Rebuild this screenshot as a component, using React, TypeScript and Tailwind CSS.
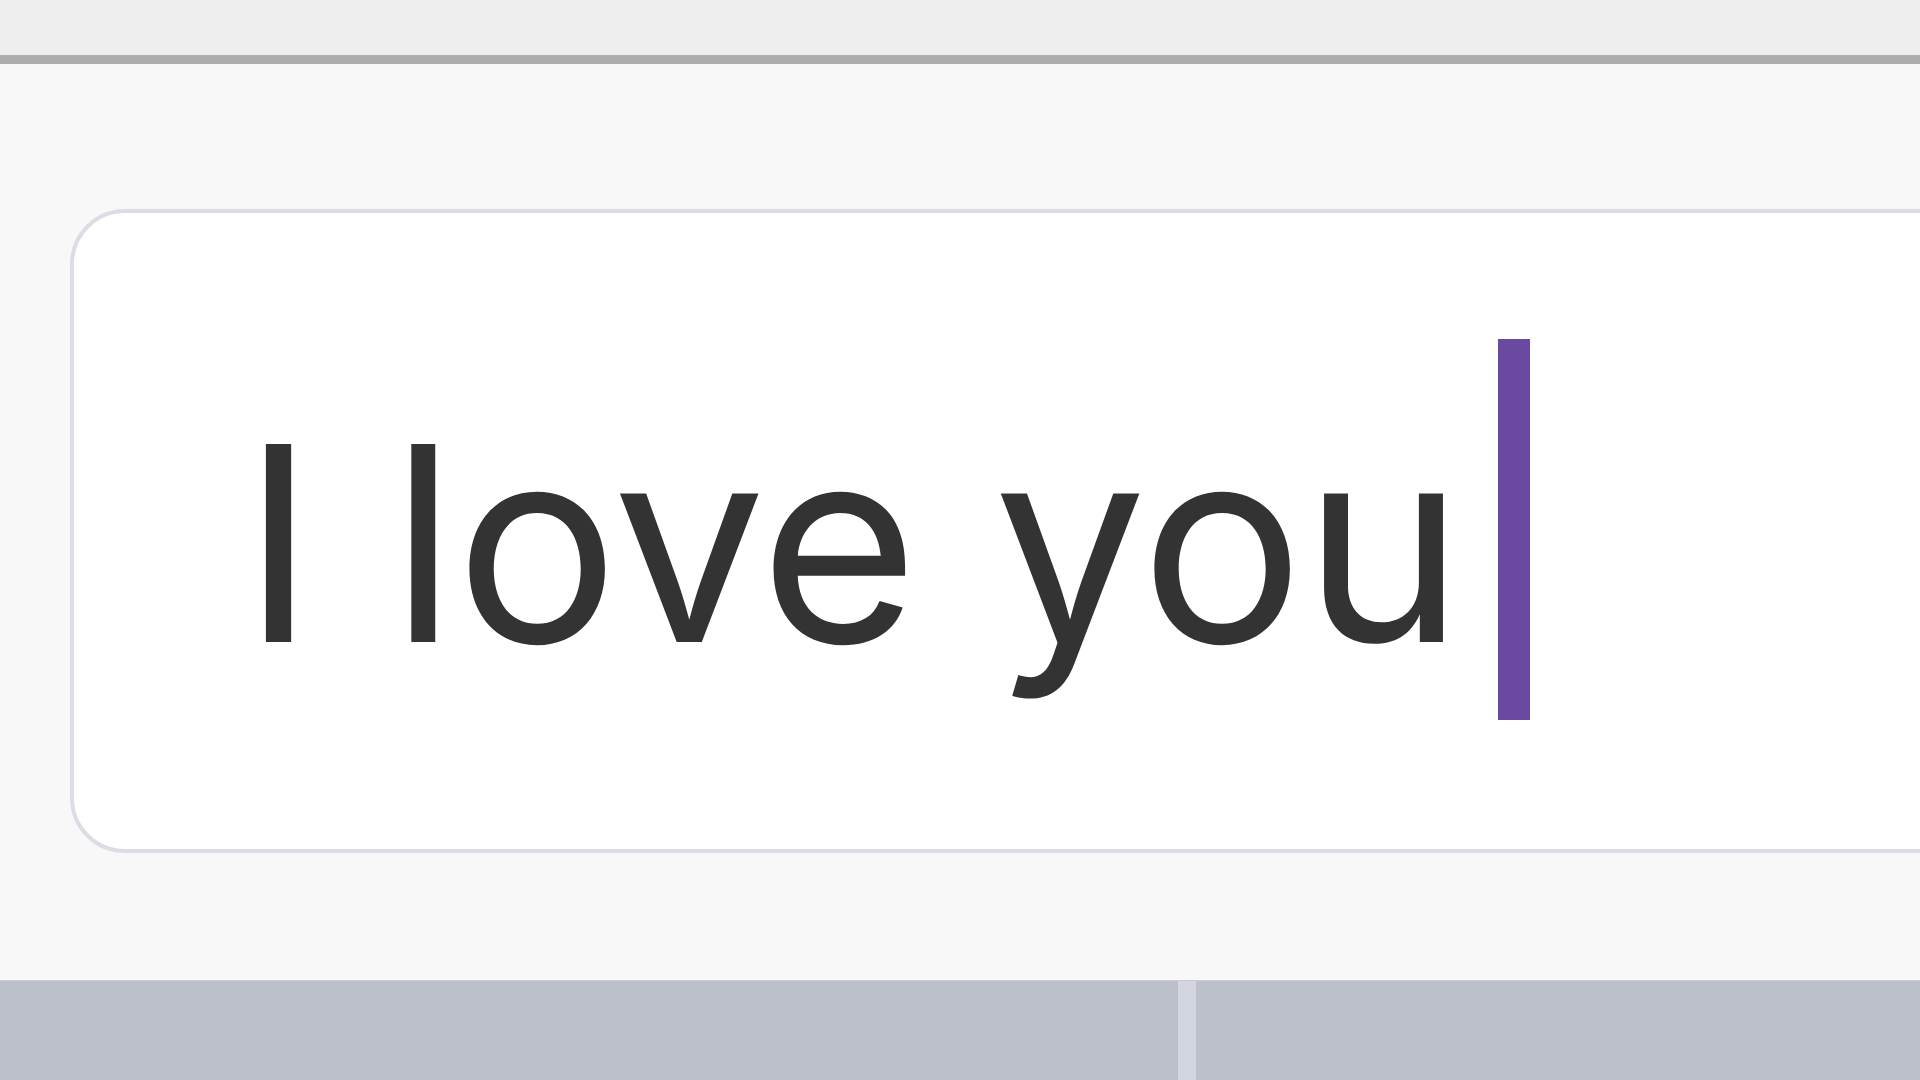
export default function App() {
  return (
    <div className="w-[1920px] h-[1080px] overflow-hidden flex flex-col bg-[#f8f8f8]" style={{ fontFamily: "Inter, 'Noto Sans', sans-serif" }}>
      {/* top chrome */}
      <div className="h-[55px] bg-[#eeeeee] shrink-0" />
      <div className="h-[9px] bg-[#adadad] shrink-0" />

      {/* editor area */}
      <div className="flex-1 pt-[145px] pl-[70px]">
        <div className="h-[644px] w-[1920px] rounded-[55px] border-[4px] border-[#dddbe5] bg-white flex items-start pl-[168px]">
          <span className="mt-[194px] text-[272px] leading-none tracking-[-0.6px] text-[#333333] whitespace-pre">I love you</span>
          <div className="mt-[126px] ml-[35px] w-[32px] h-[381px] bg-[#6a4aa0] shrink-0" />
        </div>
      </div>

      {/* bottom panel */}
      <div className="h-[100px] shrink-0 bg-[#bcc0cb] flex border-t border-[#c8cbd4]">
        <div className="w-[1178px]" />
        <div className="w-[18px] bg-[#d3d6de]" />
        <div className="flex-1" />
      </div>
    </div>
  );
}
